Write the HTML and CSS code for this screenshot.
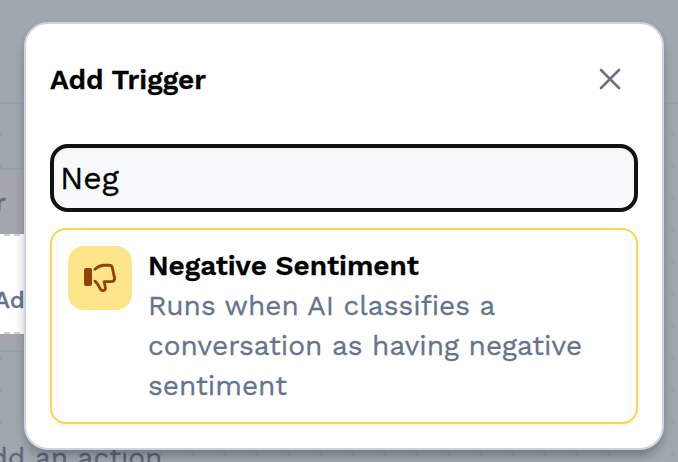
FILE: index.html
```
<!DOCTYPE html>
<html lang="en">
<head>
<meta charset="utf-8">
<title>Add Trigger</title>
<link rel="stylesheet" href="styles.css">
</head>
<body>
<div class="page">
  <div class="topbar"></div>
  <div class="canvas">
    <section class="step">
      <div class="step-label">Trigger</div>
      <div class="step-slot"><span>Add</span></div>
    </section>
    <div class="action-hint">Add an action</div>
  </div>
</div>
<div class="modal" role="dialog" aria-labelledby="title">
  <header class="modal-header">
    <h1 class="modal-title" id="title">Add Trigger</h1>
    <button class="close" aria-label="Close">
      <svg width="24" height="24" viewBox="0 0 24 24" fill="none" stroke="#6b7280" stroke-width="2.6" stroke-linecap="round"><path d="M3 3l18 18M21 3L3 21"/></svg>
    </button>
  </header>
  <div class="search">Neg</div>
  <div class="option">
    <div class="option-icon">
      <svg width="64" height="64" viewBox="0 0 64 64" fill="none" stroke="#92400e" stroke-width="2.9" stroke-linecap="round" stroke-linejoin="round"><rect x="16" y="22" width="8" height="18" rx="2" fill="#92400e" stroke="none"/><path d="M27 23.3C30 20.5 33 19.3 36.500 19.300H41.500C43 19.300 43.800 20 44.200 21.500L46.500 31.500C46.900 34 45.500 35.600 43.200 35.600H36.200L37.300 41C37.800 43.200 36.700 44.600 34.900 44.600C33.500 44.600 32.600 43.700 32 42.300C30.800 39.500 29.700 37.500 27 35.200"/></svg>
    </div>
    <div class="option-text">
      <div class="option-title">Negative Sentiment</div>
      <div class="option-desc">Runs when AI classifies a conversation as having negative sentiment</div>
    </div>
  </div>
</div>
</body>
</html>
```
FILE: styles.css
```
* { box-sizing: border-box; }
body {
  margin: 0;
  width: 678px;
  height: 462px;
  overflow: hidden;
  position: relative;
  font-family: "Work Sans", "Open Sans", sans-serif;
  -webkit-text-stroke: 0.3px currentColor;
  background: #a0a7af;
}
.page { height: 462px; overflow: hidden; }
.topbar { height: 104px; border-bottom: 2px solid #979eab; }
.canvas {
  height: 358px;
  padding-top: 64px;
  background-image: radial-gradient(circle at 17px 16px, #979eaa 1.5px, transparent 2.3px);
  background-size: 32px 32px;
  background-position: -16px 14px;
}
.step {
  width: 620px;
  height: 184px;
  border: solid #979eab;
  border-width: 2px 0;
  background: #a3a6ad;
}
.step-label {
  height: 64px;
  margin-left: -88px;
  font-size: 26px;
  line-height: 64px;
  font-weight: 500;
  color: #5b677d;
  width: 94px;
  text-align: right;
}
.step-slot {
  height: 100px;
  margin-left: -6px;
  border: 2px dashed #cbd5e1;
  background: #fff;
  font-size: 24px;
  line-height: 128px;
  font-weight: 500;
  color: #64748b;
}
.step-slot span { margin-left: -2px; }
.action-hint {
  margin: 86px 0 0 -28px;
  font-size: 28px;
  line-height: 40px;
  color: #5b677d;
}
.modal {
  position: absolute;
  left: 24px;
  top: 22px;
  width: 640px;
  height: 428px;
  padding: 24px;
  border: 2px solid #cbd5e1;
  border-radius: 24px;
  background: #fff;
  box-shadow: 0 8px 12px -2px rgba(0,0,0,.2), 0 4px 12px -4px rgba(0,0,0,.2);
}
.modal-header {
  height: 62px;
  display: flex;
  justify-content: space-between;
  padding-right: 16px;
}
.modal-title {
  margin: 0;
  font-size: 28px;
  line-height: 64px;
  font-weight: 600;
  color: #000;
}
.close { width: 24px; height: 24px; margin: 19px 0 0; padding: 0; border: 0; background: none; }
.close svg { display: block; }
.search {
  height: 68px;
  margin-top: 34px;
  padding: 0 6px;
  border: 4px solid #111;
  border-radius: 18px;
  background: #f8fafc;
  box-shadow: inset 0 2px 4px rgba(0,0,0,.05);
  font-size: 32px;
  line-height: 60px;
  color: #000;
}
.option {
  display: flex;
  gap: 16px;
  height: 196px;
  margin-top: 16px;
  padding: 16px;
  border: 2px solid #fcd34d;
  border-radius: 16px;
  box-shadow: 0 2px 4px rgba(0,0,0,.05);
}
.option-icon { flex: none; width: 64px; height: 64px; border-radius: 16px; background: #fde68a; }
.option-icon svg { display: block; }
.option-text { font-size: 28px; line-height: 40px; }
.option-title { font-weight: 600; color: #000; }
.option-desc { color: #64748b; }
```
